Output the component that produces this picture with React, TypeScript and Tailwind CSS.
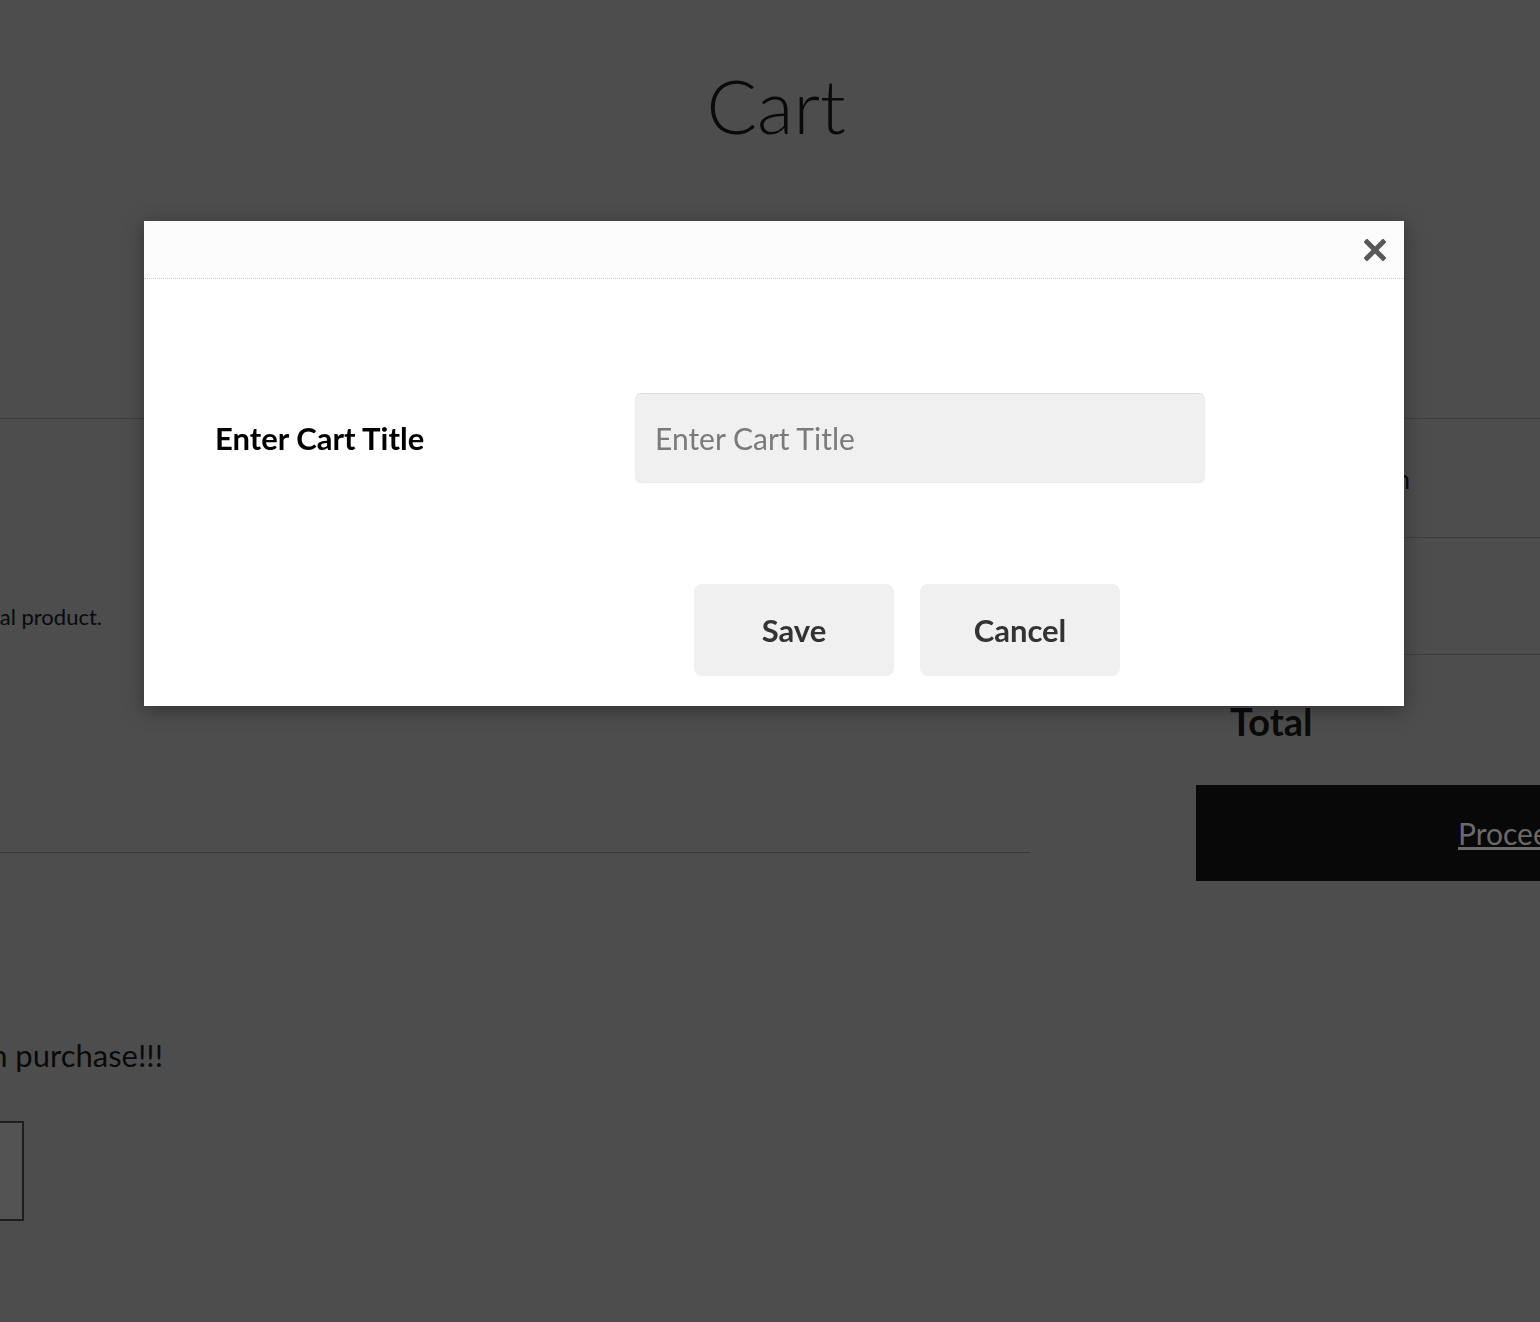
import React from 'react';

function CloseIcon() {
  return (
    <svg width="22" height="22" viewBox="0 0 22 22" aria-hidden="true">
      <path d="M3 3 L19 19 M19 3 L3 19" stroke="#585858" strokeWidth="5" strokeLinecap="square" />
    </svg>
  );
}

// trailing part of a line that runs off the left edge of the view
function Clipped({ width, className, children }: { width: string; className?: string; children: React.ReactNode }) {
  return (
    <div className={`flex justify-end overflow-hidden ${width} ${className ?? ''}`}>
      <span className="whitespace-nowrap">{children}</span>
    </div>
  );
}

function CartTitleModal() {
  return (
    <div className="fixed inset-0 flex items-start justify-center pl-[8px] pt-[221px]">
      <div className="h-[485px] w-[1260px] bg-white shadow-[0_4px_18px_rgba(0,0,0,0.35)]">
        <div className="flex h-[58px] items-center justify-end border-b border-dotted border-[#cfcfcf] bg-[#fcfcfc] pr-[18px]">
          <button type="button" className="grid h-[22px] w-[22px] place-items-center">
            <CloseIcon />
          </button>
        </div>
        <div className="pt-[114px]">
          <div className="flex items-center pl-[71px]">
            <label className="w-[420px] text-[31px] font-bold text-black">Enter Cart Title</label>
            <input
              type="text"
              placeholder="Enter Cart Title"
              className="h-[90px] w-[570px] rounded-[6px] border border-[#ececec] border-t-[#dcdcdc] bg-[#f0f0f0] pl-[19px] text-[30px] text-[#333] outline-none placeholder:text-[#7a7a7a]"
            />
          </div>
          <div className="mt-[101px] flex gap-[26px] pl-[550px]">
            <button type="button" className="h-[92px] w-[200px] rounded-[8px] bg-[#f0f0f0] text-[31px] font-bold text-[#333]">
              Save
            </button>
            <button type="button" className="h-[92px] w-[200px] rounded-[8px] bg-[#f0f0f0] text-[31px] font-bold text-[#333]">
              Cancel
            </button>
          </div>
        </div>
      </div>
    </div>
  );
}

export default function App() {
  return (
    <div className="relative min-h-[1322px] w-full overflow-hidden bg-[#4d4d4d] font-['Lato',sans-serif] text-[#0a0a0a]">
      <h1 className="pl-[12px] pt-[55px] text-center text-[75px] font-light leading-[100px]">Cart</h1>

      <div className="mt-[263px] flex border-t border-[#3e3e3e]">
        <div className="w-[1030px] shrink-0">
          <div className="h-[434px] border-b border-[#383838] pt-[184px]">
            <Clipped width="w-[102px]" className="text-[22px] leading-[28px]">
              Digital product.
            </Clipped>
          </div>
          <Clipped width="w-[163px]" className="mt-[184px] text-[31px] leading-[36px]">
            Earn points on purchase!!!
          </Clipped>
          <div className="mt-[48px] h-[100px] w-[24px] border-y-2 border-r-2 border-[#1e1e1e] bg-[#535353]" />
        </div>

        <div className="ml-[166px] flex-1">
          <div className="h-[119px] border-b border-[#3e3e3e] pt-[44px]">
            <Clipped width="w-[180px]" className="ml-[34px] text-[26px] leading-[32px]">
              Shipping Option
            </Clipped>
          </div>
          <div className="h-[117px] border-b border-[#3e3e3e]" />
          <div className="mt-[44px] pl-[34px] text-[38px] font-bold leading-[44px]">Total</div>
          <div className="mt-[42px] flex h-[96px] items-center bg-[#080808] pl-[262px]">
            <a href="#" className="whitespace-nowrap text-[30px] text-[#6a6a6a] underline">
              Proceed to Checkout
            </a>
          </div>
        </div>
      </div>

      <CartTitleModal />
    </div>
  );
}
